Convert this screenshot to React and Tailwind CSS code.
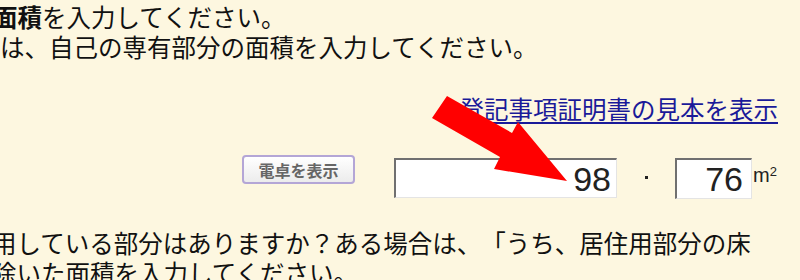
import React from 'react';

const jp = { fontFamily: '"Noto Sans CJK JP", "Noto Sans", sans-serif' };

const Arrow = () => (
  <svg className="absolute inset-0 pointer-events-none" width="800" height="280" viewBox="0 0 800 280">
    <polygon
      points="447,96 512,133 518,122 567,181 494,169 500,157 432,118"
      fill="#ff0000"
    />
  </svg>
);

export default function App() {
  return (
    <div
      className="relative w-[800px] h-[280px] overflow-hidden bg-[#fdf7e0] text-[#111]"
      style={jp}
    >
      <div className="flex flex-col pt-[2px] text-[24.5px] leading-[30px] whitespace-nowrap [text-spacing-trim:space-all]">
        <div className="-ml-[7px]">
          <span className="font-bold">面積</span>を入力してください。
        </div>
        <div>は、自己の専有部分の面積を入力してください。</div>

        <div className="mt-[32px] flex justify-end pr-[22px]">
          <a href="#" className="text-[#1a1a99] underline underline-offset-[3px]">
            登記事項証明書の見本を表示
          </a>
        </div>

        <div className="mt-[31px] flex items-start h-[44px]">
          <button className="ml-[242px] w-[113px] h-[29px] rounded-[4px] border-2 border-[#b4a6d6] bg-gradient-to-b from-white to-[#ececec] text-[16px] leading-none font-bold text-[#666]">
            電卓を表示
          </button>
          <div
            className="ml-[39px] mt-[3px] w-[223px] h-[40px] bg-white border-t-2 border-l-2 border-b border-r border-t-[#707070] border-l-[#707070] border-b-[#e4e4e4] border-r-[#e4e4e4] flex items-center justify-end pr-[5px] text-[34px] text-[#222]"
            style={{ fontFamily: '"Liberation Sans", Arial, sans-serif' }}
          >
            98
          </div>
          <div className="w-[58px] flex justify-center pt-[21px]">
            <span className="w-[3px] h-[3px] bg-[#222]" />
          </div>
          <div
            className="mt-[3px] w-[77px] h-[41px] bg-white border-t-2 border-l-2 border-b border-r border-t-[#707070] border-l-[#707070] border-b-[#e4e4e4] border-r-[#e4e4e4] flex items-center justify-end pr-[8px] text-[34px] text-[#222]"
            style={{ fontFamily: '"Liberation Sans", Arial, sans-serif' }}
          >
            76
          </div>
          <span
            className="mt-[10px] ml-[1px] text-[20px] leading-none text-[#222]"
            style={{ fontFamily: '"Liberation Sans", Arial, sans-serif' }}
          >
            m<sup className="text-[13px]">2</sup>
          </span>
        </div>

        <div className="mt-[29px] -ml-[8px]">
          用している部分はありますか？ある場合は、「うち、居住用部分の床
        </div>
        <div className="-ml-[8px]">除いた面積を入力してください。</div>
      </div>
      <Arrow />
    </div>
  );
}
